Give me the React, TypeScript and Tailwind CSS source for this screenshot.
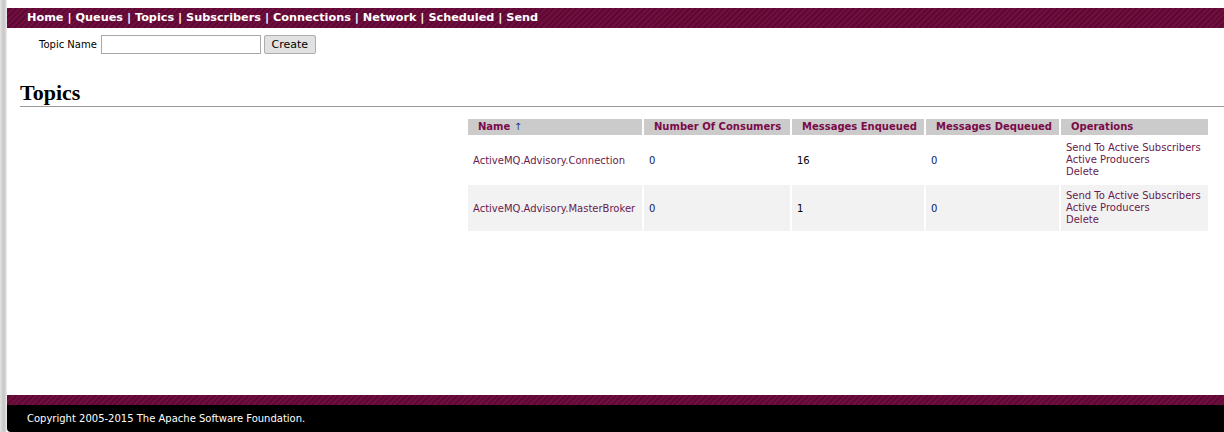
const NAV = ["Home", "Queues", "Topics", "Subscribers", "Connections", "Network", "Scheduled", "Send"];

type Topic = { name: string; consumers: number; enqueued: number; dequeued: number };

const TOPICS: Topic[] = [
  { name: "ActiveMQ.Advisory.Connection", consumers: 0, enqueued: 16, dequeued: 0 },
  { name: "ActiveMQ.Advisory.MasterBroker", consumers: 0, enqueued: 1, dequeued: 0 },
];

const stripes =
  "bg-[#6d0d3c] bg-[repeating-linear-gradient(135deg,#6f0f3f_0px,#6f0f3f_2px,#5f0833_2px,#5f0833_4px)]";

export default function App() {
  return (
    <div className="flex h-[432px] w-[1224px] overflow-hidden bg-white font-['DejaVu_Sans',Verdana,sans-serif] text-[10px] text-black">
      {/* left shadow edge */}
      <div className="w-[7px] shrink-0 bg-[linear-gradient(90deg,#e4e4e4_0px,#d2d2d2_2px,#c6c6c6_4px,#dedede_6px,#f0f0f0_7px)]" />

      <div className="flex min-w-0 flex-1 flex-col">
        <div className="h-[8px] shrink-0" />

        <div className={`flex h-[20px] shrink-0 items-center pl-[20px] text-[11.25px] font-bold text-white ${stripes}`}>
          {NAV.map((item, i) => (
            <span key={item} className="whitespace-pre">
              {i > 0 && " | "}
              {item}
            </span>
          ))}
        </div>

        <div className="flex-1">
          <form className="mt-[7px] flex items-center pl-[32px]" onSubmit={(e) => e.preventDefault()}>
            <label className="mr-[4px] text-[10px]">Topic Name</label>
            <input className="h-[19px] w-[160px] border border-[#a9a9a9] bg-white px-1 text-[10px]" />
            <button
              type="submit"
              className="ml-[3px] h-[19px] w-[52px] rounded-[2px] border border-[#adadad] bg-[#e1e1e1] font-['DejaVu_Sans',sans-serif] text-[11px] leading-none"
            >
              Create
            </button>
          </form>

          <h2 className="ml-[13px] mt-[27px] border-b border-[#9a9a9a] pb-[2px] font-['Liberation_Serif',serif] text-[22px] font-bold leading-[23px]">
            Topics
          </h2>

          <div className="mt-[10px] flex justify-end pr-[14px]">
            <table className="w-[744px] table-fixed border-separate border-spacing-[2px] whitespace-nowrap text-[10px]">
              <colgroup>
                <col className="w-[174px]" />
                <col className="w-[146px]" />
                <col className="w-[132px]" />
                <col className="w-[133px]" />
                <col className="w-[147px]" />
              </colgroup>
              <thead>
                <tr className="text-left font-bold text-[#7b0a49]">
                  <th className="h-[16px] bg-[#cbcbcb] py-0 pl-[10px] leading-[16px]">
                    Name <span className="font-normal text-[#2a3a8a]">↑</span>
                  </th>
                  <th className="bg-[#cbcbcb] py-0 pl-[10px] leading-[16px]">Number Of Consumers</th>
                  <th className="bg-[#cbcbcb] py-0 pl-[10px] leading-[16px]">Messages Enqueued</th>
                  <th className="bg-[#cbcbcb] py-0 pl-[10px] leading-[16px]">Messages Dequeued</th>
                  <th className="bg-[#cbcbcb] py-0 pl-[10px] leading-[16px]">Operations</th>
                </tr>
              </thead>
              <tbody>
                {TOPICS.map((t, i) => {
                  const bg = i % 2 === 1 ? "bg-[#f2f2f2]" : "bg-white";
                  return (
                    <tr key={t.name}>
                      <td className={`h-[46px] pl-[5px] text-[#6a1a4e] ${bg}`}>{t.name}</td>
                      <td className={`pl-[5px] text-[#0a1a6a] ${bg}`}>{t.consumers}</td>
                      <td className={`pl-[5px] ${bg}`}>{t.enqueued}</td>
                      <td className={`pl-[5px] text-[#0a1a6a] ${bg}`}>{t.dequeued}</td>
                      <td className={`pl-[5px] leading-[12px] text-[#6a1a4e] ${bg}`}>
                        Send To Active Subscribers
                        <br />
                        Active Producers
                        <br />
                        Delete
                      </td>
                    </tr>
                  );
                })}
              </tbody>
            </table>
          </div>
        </div>

        <div className={`h-[10px] shrink-0 ${stripes}`} />
        <div className="flex h-[27px] shrink-0 items-center rounded-bl-[4px] bg-black pl-[20px] text-[10px] text-white">
          Copyright 2005-2015 The Apache Software Foundation.
        </div>
      </div>
    </div>
  );
}
